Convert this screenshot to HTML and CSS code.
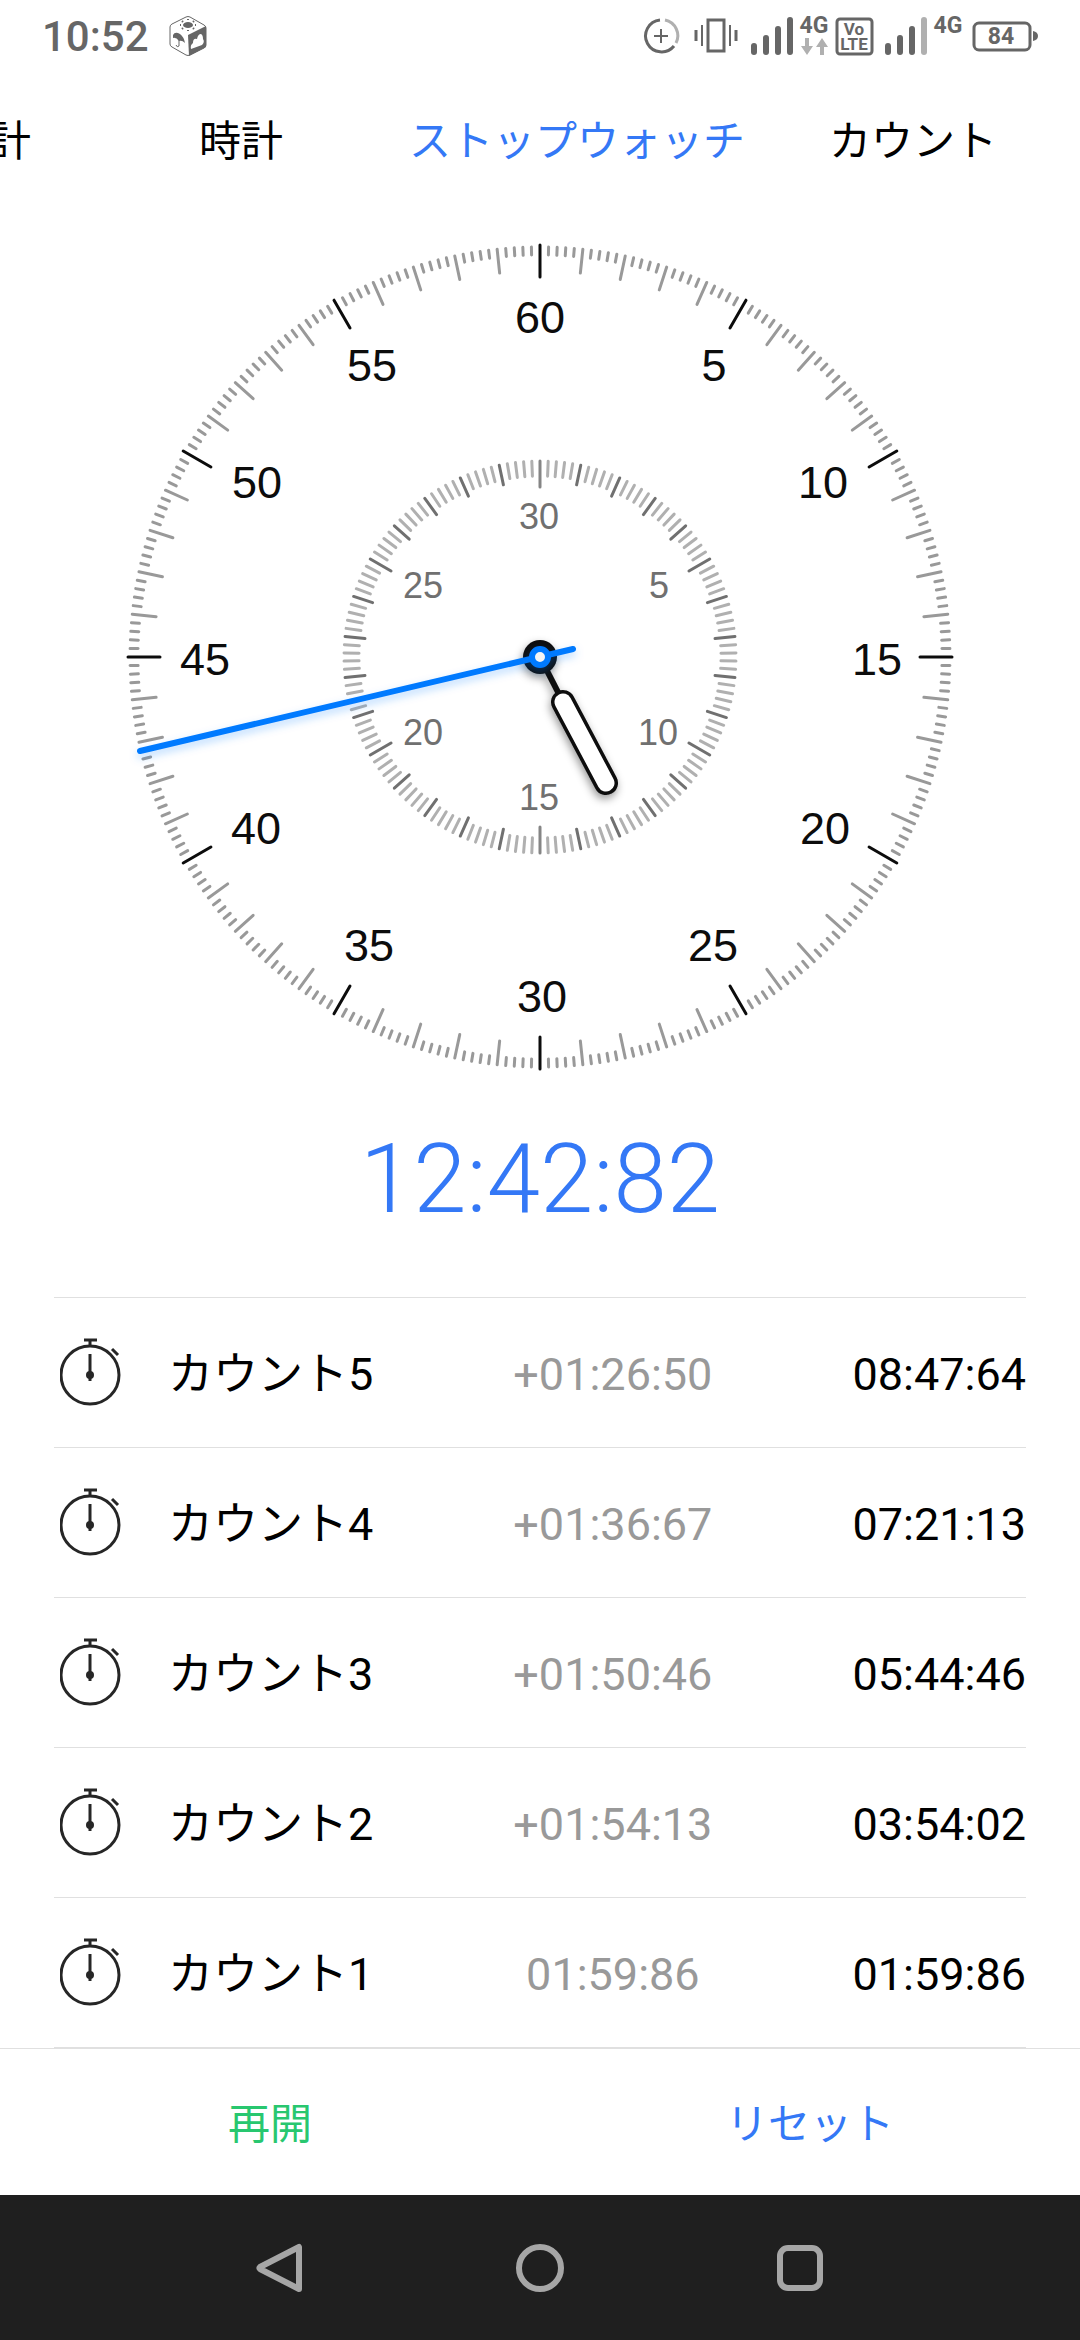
FILE: index.html
```html
<!DOCTYPE html>
<html lang="ja">
<head>
<meta charset="utf-8">
<meta name="viewport" content="width=device-width, initial-scale=1">
<title>ストップウォッチ</title>
<link rel="stylesheet" href="styles.css">
</head>
<body>
<svg class="symbols" aria-hidden="true">
  <symbol id="stopwatch" viewBox="0 0 64 72">
    <g fill="none" stroke="#262626">
      <circle cx="30" cy="38" r="29" stroke-width="3"/>
      <path d="M24 3h13" stroke-width="3"/>
      <path d="M30 3v7M30 17v27" stroke-width="3"/>
      <path d="M52 12l6 6" stroke-width="3"/>
    </g>
    <circle cx="30" cy="38" r="4" fill="#262626"/>
  </symbol>
</svg>

<div class="screen">
  <header class="status">
    <span class="status-time">10:52</span>
    <svg class="app-icon" width="38" height="42" viewBox="0 0 38 42">
      <path d="M17 2Q19 1 21 2L35 10Q37 11 37 13V30Q37 32 35 33L21 40Q19 41 17 40L3 32Q1 31 1 29V12Q1 10 3 9Z" fill="#fff" stroke="#666" stroke-width="1"/>
      <path d="M19 20L37 11V32L20 41Z" fill="#666"/>
      <path d="M22 34Q21 30 24 28Q24 23 28 24Q29 19 32 19Q34 20 34 24Q36 27 33 30Z" fill="#fff"/>
      <ellipse cx="19" cy="10" rx="5" ry="3" fill="#666"/>
      <path d="M19 4v1M19 15v1M11 10h1M26 10h1M13 6l1 1M25 6l-1 1M13 14l1-1M25 14l-1-1" stroke="#666" stroke-width="2"/>
      <path d="M4 20Q6 16 11 19Q15 22 16 28Q13 25 10 26Q7 22 4 23Z" fill="#666"/>
      <path d="M10 24V31Q8 33 7 30" fill="none" stroke="#666" stroke-width="1"/>
    </svg>
    <div class="status-icons">
      <svg width="44" height="40" viewBox="0 0 44 40">
        <g fill="none" stroke-width="3">
          <path d="M17 4A16 16 0 1 0 31 30" stroke="#666"/>
          <path d="M22 4A16 16 0 0 1 33 27" stroke="#b0b0b0"/>
          <path d="M18 13v14M11 20h14" stroke="#666" stroke-width="2"/>
        </g>
      </svg>
      <svg width="48" height="40" viewBox="0 0 48 40">
        <path d="M13 4h16v31h-16z" fill="none" stroke="#666" stroke-width="3"/>
        <path d="M7 9v21M35 9v21" stroke="#666" stroke-width="2"/>
        <path d="M1 14v11M41 14v11" stroke="#666" stroke-width="3"/>
      </svg>
      <svg width="42" height="40" viewBox="0 0 42 40">
        <path d="M3 30v6M15 22v14M27 13v23M39 4v32" stroke="#666" stroke-width="6" stroke-linecap="round"/>
      </svg>
      <svg class="net" width="26" height="40" viewBox="0 0 26 40">
        <text x="13" y="17" text-anchor="middle">4G</text>
        <path d="M4 22h4v8h4l-6 9l-6-9h4zM19 39h4v-8h4l-6-9l-6 9h4z" fill="#b0b0b0"/>
      </svg>
      <svg class="volte" width="42" height="40" viewBox="0 0 42 40">
        <rect x="2" y="3" width="35" height="35" rx="3" fill="none" stroke="#666" stroke-width="3"/>
        <text x="19" y="19" text-anchor="middle">Vo</text>
        <text x="19" y="34" text-anchor="middle">LTE</text>
      </svg>
      <svg width="42" height="40" viewBox="0 0 42 40">
        <path d="M3 30v6M15 22v14M27 13v23" stroke="#666" stroke-width="6" stroke-linecap="round"/>
        <path d="M39 4v32" stroke="#b0b0b0" stroke-width="6" stroke-linecap="round"/>
      </svg>
      <svg class="net" width="29" height="40" viewBox="0 0 29 40">
        <text x="13" y="17" text-anchor="middle">4G</text>
      </svg>
      <svg class="battery" width="66" height="40" viewBox="0 0 66 40">
        <rect x="2" y="7" width="56" height="27" rx="5" fill="none" stroke="#666" stroke-width="3"/>
        <path d="M61 15Q66 16 66 20Q66 24 61 25Z" fill="#666"/>
        <text x="29" y="28" text-anchor="middle">84</text>
      </svg>
    </div>
  </header>

  <nav class="tabs">
    <a class="tab tab-wide" href="#world">世界時計</a>
    <a class="tab" href="#clock">時計</a>
    <a class="tab tab-active" href="#stopwatch-view" aria-current="page">ストップウォッチ</a>
    <a class="tab" href="#timer">カウント</a>
  </nav>

  <main class="content" id="stopwatch-view">
    <svg class="dial" viewBox="-420 -420 840 840" role="img" aria-label="ストップウォッチの文字盤">
      <defs>
        <filter id="shade" filterUnits="userSpaceOnUse" x="-420" y="-420" width="840" height="840">
          <feDropShadow dx="-1" dy="4" stdDeviation="4" flood-color="#000" flood-opacity="0.4"/>
        </filter>
        <filter id="glow" filterUnits="userSpaceOnUse" x="-420" y="-420" width="840" height="840">
          <feDropShadow dx="0" dy="4" stdDeviation="4" flood-color="#007aff" flood-opacity="0.3"/>
        </filter>
      </defs>
      <g id="ticks" stroke-width="3" stroke-linecap="round"></g>
      <g class="numbers">
        <text x="0" y="-324">60</text>
        <text x="174" y="-276">5</text>
        <text x="283" y="-159">10</text>
        <text x="337" y="18">15</text>
        <text x="285" y="187">20</text>
        <text x="173" y="304">25</text>
        <text x="2" y="355">30</text>
        <text x="-171" y="304">35</text>
        <text x="-284" y="187">40</text>
        <text x="-335" y="18">45</text>
        <text x="-283" y="-159">50</text>
        <text x="-168" y="-276">55</text>
      </g>
      <g class="numbers numbers-small">
        <text x="-1" y="-128">30</text>
        <text x="119" y="-59">5</text>
        <text x="118" y="88">10</text>
        <text x="-1" y="153">15</text>
        <text x="-117" y="88">20</text>
        <text x="-117" y="-59">25</text>
      </g>
      <g filter="url(#shade)" stroke-linecap="round">
        <circle r="17" fill="#0c0c0c"/>
        <path d="M0 0L23 45" stroke="#0c0c0c" stroke-width="6"/>
        <path d="M23 45L66 126" stroke="#0c0c0c" stroke-width="24"/>
        <path d="M23 45L66 126" stroke="#fff" stroke-width="17"/>
      </g>
      <g filter="url(#glow)" stroke-linecap="round">
        <path d="M-400 94L33 -8" stroke="#007aff" stroke-width="6"/>
        <circle r="8" fill="#f5f5f5" stroke="#007aff" stroke-width="6"/>
      </g>
    </svg>

    <time class="elapsed">12:42:82</time>

    <table class="laps">
      <tbody>
        <tr><td class="lap-icon"><svg width="64" height="72"><use href="#stopwatch"/></svg></td><th scope="row">カウント5</th><td class="lap-delta">+01:26:50</td><td>08:47:64</td></tr>
        <tr><td class="lap-icon"><svg width="64" height="72"><use href="#stopwatch"/></svg></td><th scope="row">カウント4</th><td class="lap-delta">+01:36:67</td><td>07:21:13</td></tr>
        <tr><td class="lap-icon"><svg width="64" height="72"><use href="#stopwatch"/></svg></td><th scope="row">カウント3</th><td class="lap-delta">+01:50:46</td><td>05:44:46</td></tr>
        <tr><td class="lap-icon"><svg width="64" height="72"><use href="#stopwatch"/></svg></td><th scope="row">カウント2</th><td class="lap-delta">+01:54:13</td><td>03:54:02</td></tr>
        <tr><td class="lap-icon"><svg width="64" height="72"><use href="#stopwatch"/></svg></td><th scope="row">カウント1</th><td class="lap-delta">01:59:86</td><td>01:59:86</td></tr>
      </tbody>
    </table>
  </main>

  <div class="actions">
    <button class="action action-resume" type="button">再開</button>
    <button class="action action-reset" type="button">リセット</button>
  </div>

  <footer class="system">
    <button type="button" aria-label="戻る"><svg width="50" height="50" viewBox="0 0 50 50"><path d="M44 4V46L5 26Q4 25 5 24Z"/></svg></button>
    <button type="button" aria-label="ホーム"><svg width="50" height="50" viewBox="0 0 50 50"><circle cx="25" cy="25" r="21"/></svg></button>
    <button type="button" aria-label="最近"><svg width="50" height="50" viewBox="0 0 50 50"><rect x="5" y="5" width="40" height="40" rx="8"/></svg></button>
  </footer>
</div>
<script src="dial.js"></script>
</body>
</html>
```
FILE: styles.css
```css
* {
  box-sizing: border-box;
}

body {
  margin: 0;
  background: #fff;
  color: #000;
  font-family: Roboto, "Noto Sans CJK JP", sans-serif;
}

button {
  border: 0;
  padding: 0;
  background: none;
  font: inherit;
}

svg {
  display: block;
  overflow: visible;
}

.symbols {
  position: absolute;
  width: 0;
  height: 0;
}

.screen {
  display: flex;
  flex-direction: column;
  min-height: 100vh;
  overflow: hidden;
}

.status {
  display: flex;
  align-items: center;
  height: 72px;
  padding: 0 42px;
  color: #666;
}

.status-time {
  padding-top: 2px;
  font-size: 42px;
  font-weight: 500;
  line-height: 48px;
}

.app-icon {
  margin-left: 20px;
}

.status-icons {
  display: flex;
  gap: 8px;
  margin-left: auto;
}

.status-icons text {
  fill: #666;
  font-weight: 700;
}

.net text {
  font-size: 23px;
}

.volte text {
  font-size: 17px;
}

.battery text {
  font-size: 23px;
}

.tabs {
  display: flex;
  justify-content: flex-end;
  height: 136px;
  padding-right: 41px;
  overflow: hidden;
}

.tab {
  flex: none;
  min-width: 252px;
  padding: 0 42px;
  color: #000;
  font-size: 42px;
  line-height: 140px;
  text-align: center;
  text-decoration: none;
}

.tab-wide {
  min-width: 336px;
}

.tab-active {
  color: #3478f6;
}

.content {
  display: flex;
  flex: 1;
  flex-direction: column;
  align-items: center;
  padding: 29px 54px 0;
}

.dial {
  width: 840px;
  max-width: 100%;
}

.numbers {
  fill: #0c0c0c;
  font-family: "Liberation Sans", Arial, sans-serif;
  font-size: 45px;
  text-anchor: middle;
}

.numbers-small {
  fill: #707070;
  font-size: 36px;
}

.elapsed {
  margin: 46px 0 62px;
  color: #3478f6;
  font-size: 96px;
  font-weight: 300;
  line-height: 112px;
}

.laps {
  width: 100%;
  border-top: 1px solid #e0e0e0;
  border-spacing: 0;
  font-size: 45px;
  line-height: 52px;
  white-space: nowrap;
}

.laps tr {
  height: 150px;
}

.laps td,
.laps th {
  padding: 4px 0 0;
  border-bottom: 1px solid #e0e0e0;
  font-weight: 400;
}

.laps .lap-icon {
  padding: 0 44px 0 6px;
}

.laps .lap-delta {
  width: 100%;
  color: #999;
  text-align: center;
}

.actions {
  display: flex;
  height: 147px;
  border-top: 1px solid #e0e0e0;
}

.action {
  flex: 1;
  padding-bottom: 4px;
  font-size: 42px;
}

.action-resume {
  color: #28c76f;
}

.action-reset {
  color: #3478f6;
}

.system {
  display: flex;
  justify-content: center;
  gap: 210px;
  height: 145px;
  background: #1f1f1f;
}

.system svg {
  fill: none;
  stroke: #a6a6a6;
  stroke-width: 6;
  stroke-linejoin: round;
}
```
FILE: dial.js
```javascript
const ticks = document.getElementById("ticks");

function addTick(angle, outer, inner, color) {
  const line = document.createElementNS("http://www.w3.org/2000/svg", "line");
  line.setAttribute("y1", -outer);
  line.setAttribute("y2", -inner);
  line.setAttribute("stroke", color);
  line.setAttribute("transform", `rotate(${angle})`);
  ticks.append(line);
}

// Seconds ring: 60 seconds, five steps in each
for (let i = 0; i < 300; i++) {
  const angle = i * 360 / 300;
  if (i % 25 === 0) addTick(angle, 412, 380, "#0c0c0c");
  else if (i % 5 === 0) addTick(angle, 410, 386, "#999");
  else addTick(angle, 410, 402, "#999");
}

// Minutes ring: 30 minutes, five steps in each
for (let i = 0; i < 150; i++) {
  const angle = i * 360 / 150;
  if (i % 75 === 0) addTick(angle, 196, 170, "#858585");
  else if (i % 25 === 0) addTick(angle, 196, 172, "#707070");
  else if (i % 5 === 0) addTick(angle, 196, 176, "#707070");
  else addTick(angle, 196, 181, "#b0b0b0");
}
```
